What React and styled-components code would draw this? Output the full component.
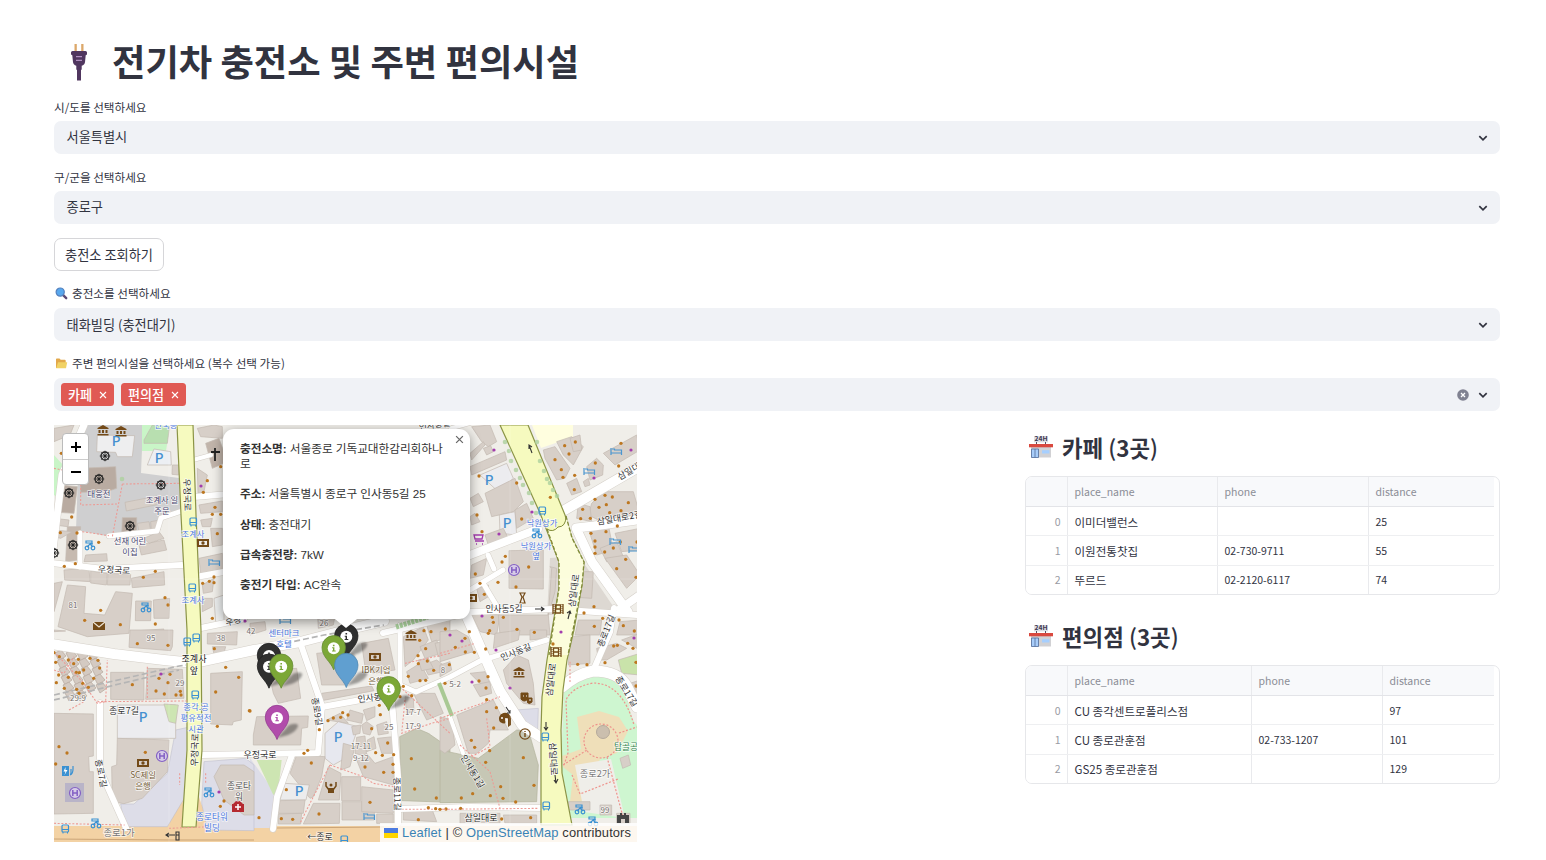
import React from "react";
import styled, { createGlobalStyle } from "styled-components";

const Global = createGlobalStyle`
  * { box-sizing: border-box; }
  body { margin: 0; background: #fff; overflow: hidden; }
`;
const Page = styled.main`
  width: 1546px; height: 860px; padding: 35px 46px 0 54px; overflow: hidden;
  font-family: "Noto Sans CJK KR", sans-serif; color: #31333f;
`;
const Title = styled.h1`
  display: flex; align-items: center; height: 50px; margin: 0 0 12.3px; gap: 11px; padding-left: 5px;
  font-size: 36.3px; line-height: 50px; font-weight: 700; white-space: nowrap;
  svg { margin-top: 2px; }
`;
const Label = styled.label`
  display: flex; align-items: center; gap: 4px; height: 20px; margin-bottom: 3.7px;
  font-size: 11.6px; line-height: 20px; white-space: nowrap;
`;
const Field = styled.section`
  display: flex; flex-direction: column; justify-content: space-between;
  height: ${p => p.$tall ? 57.9 : 57.2}px; margin-bottom: ${p => p.$gap ?? 12.8}px;
`;
const SelectBox = styled.div`
  display: flex; align-items: center; height: 33.5px; padding: 0 11px 0 ${p => p.$tags ? 7 : 12.5}px;
  border-radius: 7px; background: #f0f2f6; font-size: 13.2px; line-height: 20px; flex: none;
`;
const Fill = styled.div`flex: 1; display: flex; gap: 7px; padding-bottom: ${p => p.$lift ?? 0}px;`;
const Tag = styled.span`
  display: flex; align-items: center; justify-content: space-between; width: ${p => p.$w}px; height: 23px;
  padding: 0 7px; border-radius: 3.5px; background: #e05a54; color: #fff;
  font-size: 13.1px; font-weight: 500; line-height: 20px;
`;
const Tools = styled.div`display: flex; align-items: center; gap: 8px;`;
const Button = styled.button`
  width: 110px; height: 33px; margin: 13.7px 0 12.3px; padding: 0 0 1px; border: 1px solid #d6d6d9; border-radius: 7px;
  background: #fff; color: #31333f; font: 400 13.2px "Noto Sans CJK KR", sans-serif; display: block;
`;
const Columns = styled.div`display: grid; grid-template-columns: 958px 475px; column-gap: 13px; align-items: start;`;
const MapFrame = styled.div`
  position: relative; width: 583px; height: 417px; overflow: hidden; background: #f0eee9;
  font-family: "Liberation Sans", "Noto Sans CJK KR", sans-serif;
`;
const MapCanvas = styled.svg`
  display: block; width: 583px; height: 417px;
  text { font-family: "Noto Sans CJK KR", sans-serif; }
`;
const Zoom = styled.div`
  position: absolute; left: 8px; top: 8px; width: 27px; border: 1px solid #bbb; border-radius: 4px;
  background: #fff; overflow: hidden;
`;
const ZoomButton = styled.div`
  height: 25px; display: flex; align-items: center; justify-content: center; color: #000;
  & + & { border-top: 1px solid #ccc; }
`;
const Popup = styled.div`
  position: absolute; left: 169px; top: 4px; width: 247px; height: 190px; padding: 11.5px 20px 0 17px;
  border-radius: 11px; background: #fff; box-shadow: 0 3px 12px rgba(0,0,0,.4); color: #333;
  font-size: 11.7px; line-height: 15.17px; white-space: nowrap;
`;
const PopupTip = styled.span`
  position: absolute; left: 112px; bottom: -9px; border: solid transparent; border-width: 9px 11px 0;
  border-top-color: #fff;
`;
const Close = styled.span`position: absolute; right: 6px; top: 6px; line-height: 0;`;
const Line = styled.p`margin: 0 0 15.17px; letter-spacing: -.06px; b { font-weight: 700; }`;
const Credit = styled.div`
  position: absolute; right: 0; bottom: 0; width: 257px; height: 19px; display: flex; align-items: center; gap: 4px;
  padding: 0 4px; background: rgba(255,255,255,.82); font-size: 12.9px; letter-spacing: .12px; color: #333; white-space: nowrap;
  a { color: #3a83b5; }
`;
const Results = styled.aside`padding-top: 2px;`;
const Heading = styled.h2`
  display: flex; align-items: center; gap: 8px; height: 40px; margin: 0 0 9px; padding-left: 3px;
  font-size: 22.4px; line-height: 40px; font-weight: 700; white-space: nowrap;
  span { font-weight: 500; }
  svg { margin-top: 1px; }
`;
const Table = styled.div`
  height: 119px; margin-bottom: 21px; padding-right: 5px; border: 1px solid #e6e7ea; border-radius: 7px; overflow: hidden;
`;
const Row = styled.div`
  display: grid; grid-template-columns: 42px ${p => p.$cols}; height: ${p => p.$head ? 30 : 29.2}px;
  background: ${p => p.$head ? "#f8f9fb" : "#fff"}; color: ${p => p.$head ? "#8b8d96" : "#31333f"};
  border-bottom: 1px solid ${p => p.$head ? "#e3e4e8" : "#eeeff1"};
`;
const Cell = styled.div`
  display: flex; align-items: center; justify-content: ${p => p.$index ? "flex-end" : "flex-start"};
  padding: 1px 6.5px 0; border-right: ${p => p.$last ? 0 : 1}px solid #e9eaed;
  color: ${p => p.$index ? "#999ba3" : "inherit"}; font-size: ${p => p.$name ? 11.55 : 10.5}px; line-height: 20px; white-space: nowrap;
`;

const Chevron = () => <svg width="12" height="12" viewBox="0 0 12 12"><path d="M2.3 4.2 6 7.8l3.7-3.6" fill="none" stroke="#31333f" strokeWidth="1.7"/></svg>;
const Clear = () => <svg width="12" height="12" viewBox="0 0 12 12"><circle cx="6" cy="6" r="5.8" fill="#808291"/><path d="m4 4 4 4m0-4L4 8" stroke="#fff" strokeWidth="1.3"/></svg>;
const Cross = ({ c = "#fff", s = 8 }) => <svg width={s} height={s} viewBox="0 0 8 8"><path d="m1 1 6 6m0-6L1 7" stroke={c} strokeWidth="1.1"/></svg>;
const Plug = () => (
  <svg width="42" height="42" viewBox="0 0 42 42">
    <path d="M15.5 4h2.3v8h-2.3zm6.7 0h2.3v8h-2.3z" fill="#dca86a"/>
    <path d="M12 12.5q0-1.5 1.5-1.5h13q1.5 0 1.5 1.5v2l-1.3.7-.7 7q-.2 2-2 3l-1.3.6v4h-.7v10.7h-4v-10.7h-.7v-4l-1.3-.6q-1.7-1-2-3l-.7-7L12 14.5z" fill="#50365f"/>
    <path d="M17 16.7h6m-6 3.6h6" stroke="#c9a5d8" strokeWidth="1"/>
  </svg>
);
const Magnifier = () => <svg width="14" height="14" viewBox="0 0 14 14"><path d="m9.2 9.2 3 3" stroke="#5d4a75" strokeWidth="2.4" strokeLinecap="round"/><circle cx="6.2" cy="6.1" r="4.1" fill="#58a8ee" stroke="#5580bd" strokeWidth="1.2"/></svg>;
const Folder = () => <svg width="14" height="14" viewBox="0 0 14 14"><path d="M2 3.3q0-.8.8-.8h2.7l1.2 1.3h4q1 0 1 1V12H2z" fill="#e2a84a"/><path d="M4 6.3h9.2L12 12.3H2.2z" fill="#f1d264"/></svg>;
const Shop = () => (
  <svg width="26" height="24" viewBox="0 0 26 24">
    <path d="M6 0h14v6.5H6z" fill="#dedee3"/><path d="M8.5 6v3m9-3v3" stroke="#555060"/>
    <text x="6.6" y="5.3" fontSize="6" fontWeight="700" fill="#3c3550" textLength="13" lengthAdjust="spacingAndGlyphs">24H</text>
    <path d="M3 10h20v11.5H3z" fill="#d1d1d4"/><path d="M1 8h24v3.3H1z" fill="#d9493f"/>
    <path d="M3.5 13h7v8.5h-7zM7 13v8.5" fill="#a8cdfa" stroke="#536d9b" strokeWidth=".8"/><path d="M14 14.2h7.5v3.3H14z" fill="#a6cfff"/>
  </svg>
);

/* Road centre lines: [path, width] */
const roads = [
  ["M30 0 8 50-1 125", 7], ["M-2 138 50 144 128 140", 6], ["M26 142V108", 5], ["M55 111 103 106 107 93 128 86", 5],
  ["M-2 219 60 229 110 235 140 238 200 225 246 217 296 204 330 196", 10], ["M140 72 175 69M142 152 175 146M147 203 190 194", 6],
  ["M46 278V345L72 403", 6], ["M148 330 264 328 268 281 246 217", 6], ["M238 330 223 372 219 404", 6],
  ["M268 282 329 271 343 265", 6], ["M346 200V260L362 267 396 252 426 236 493 215", 5],
  ["M338 276 344 352V398", 6], ["M329 208 380 196 416 187 499 184 583 190", 6], ["M386 143 416 130 484 104", 8],
  ["M416 165 449 145M434 130 440 144M429 158 444 183", 5], ["M412 190 446 266 468 300 488 313", 10],
  ["M509 86 583 43", 10], ["M583 95 540 101 522 103 538 137 574 187", 9], ["M566 184 586 170", 8],
  ["M508 262 Q523 249 539 246 Q565 246 573 262L583 282", 11], ["M539 246 556 207 560 183", 6], ["M396 292 409 328", 4],
  ["M345 384 415 382 488 383", 6], ["M386 15 398 3 416-2M157 30 139 35", 4],
];
/* Map quadrants, each drawn in its own coordinates at three units per pixel */
const quads = [
  { at: [0, 0],
    b: ["130,30 242,32 235,95 190,95 185,82 128,80|#eeeeef", "77,130 185,125 188,190 158,200 80,202|#b9aba1", "20,180 70,185 60,265 12,262|#b9aba1", "205,278 248,278 248,330 203,330|#b9aba1", "40,305 80,305 72,405 35,410|#c6bab0", "213,232 310,213 314,238 217,258", "290,95 300,72 350,80 352,120 280,120|#eceff3", "270,45 295,0 347,0 340,55 270,55|#b8dfb0", "255,360 330,345 338,375 262,390", "270,340 315,320 330,340 285,355", "250,295 285,290 290,315 255,320", "290,290 318,285 318,315 292,317", "355,120 375,120 374,150 354,148", "95,390 158,386 160,408 90,410", "30,435 105,430 108,470 32,465", "110,438 160,445 157,480 110,474", "162,445 230,448 228,480 160,480", "232,460 330,440 332,480 235,488", "40,480 95,485 90,565 152,570 185,500 235,505 225,625 100,635 12,605", "0,475 25,470 0,560", "245,528 292,528 290,587 244,587", "298,525 347,520 345,580 300,580", "253,617 330,612 320,630 250,630", "0,280 45,285 42,305 0,300", "0,315 55,320 20,340 0,335", "430,10 480,0 505,5 505,40 440,35", "455,55 495,40 520,110 475,130|#c1b4aa", "430,130 460,150 450,200 432,205", "435,240 505,228 505,260 440,265", "440,285 475,280 470,305 445,305", "470,310 505,310 505,360 475,365", "435,400 505,385 505,432 440,445", "445,480 480,460 475,500 448,505", "445,520 475,520 475,545 445,560", "480,520 510,510 510,600 485,590|#eceeee", "0,10 60,0 48,30 0,50"],
    r: ["M80 145 80 240 190 237M205 177 375 175M205 177 175 335M85 320 165 332M0 130 25 135"],
    d: "22,85 53,276 19,323 69,324 134,352 64,416 31,424 268,457 304,439 140,556 92,586 199,599 333,518 342,540 304,597 460,167 448,202 500,125 483,247 475,268 500,268 490,326 446,475 466,469 480,456 480,473 475,580" },
  { at: [0, 205],
    b: ["228,0 357,0 355,50 350,62 225,52", "0,0 35,3 0,5", "170,127 270,127 270,210 170,208", "280,115 385,118 390,205 275,208", "0,250 118,252 118,378 104,380 106,425 118,425 118,550 0,552", "190,225 365,225 365,325 190,325|#ececef", "190,325 345,330 340,425 265,505 210,521 175,515 173,410 188,405", "330,222 373,225 365,280 345,275|#cde5b2", "460,10 550,5 548,45 460,42", "475,50 515,50 510,68 480,72", "470,130 565,125 562,270 538,275 535,285 470,282", "500,405 570,405 600,425 600,555 570,555 510,510 480,440"],
    l: ["365,300 402,292 400,490 340,590 212,590 200,522 240,522 340,430", "450,395 575,385 600,405 600,602 460,600 443,520"],
    r: ["M0 65 85 155 130 220 155 215 160 90M0 120 30 130 60 80M45 240 90 215M130 215 400 213M280 110V210M0 580 212 585M345 595 470 590M377 430V465M455 430V460"],
    d: "250,41 342,46 481,56 515,112 554,142 485,186 586,242 490,289 5,97 14,135 7,158 0,68 16,80 43,90 59,101 73,88 108,85 132,91 137,114 89,120 76,128 43,142 67,127 119,145 235,164 31,175 68,178 86,160 103,172 75,190 315,145 348,133 342,158 306,183 331,192 366,195 379,184 381,195 15,350 39,369 5,402 274,367 510,513 499,529" },
  { at: [196, 185],
    b: ["0,40 45,35 48,60 0,75|#d9d0c9", "202,0 258,0 250,45 205,55", "200,130 250,125 285,225 215,225", "335,100 415,85 435,180 370,190 345,170", "55,180 140,175 152,265 85,280 70,250", "10,375 20,320 175,318 173,352 155,355 152,405 10,405", "215,250 365,228 372,242 215,272", "270,310 295,340 230,330", "265,335 325,350 295,440 250,465 225,445 225,370|#e7e8ef", "300,300 340,312 335,340 290,330", "340,300 375,290 375,320 350,332", "335,345 350,335 370,350 360,375 340,370", "305,350 332,345 330,370 310,375", "320,382 345,378 350,440 315,430", "352,390 372,380 378,415 350,425", "280,400 315,410 300,470 272,480", "380,345 410,335 415,370 385,375", "382,385 430,380 430,430 395,430", "320,450 350,430 375,460 430,440 430,525 340,500", "140,435 225,440 215,500 190,560 180,565 120,490", "105,520 178,525 168,570 90,570|#ececed", "90,572 165,570 160,610 85,610", "85,612 155,610 152,642 85,642", "235,470 273,490 268,570 205,570", "190,580 270,580 268,640 160,642", "275,500 332,500 332,572 275,572", "276,575 375,575 372,630 276,630", "335,530 430,540 430,610 335,605", "380,612 430,612 430,640 380,640", "460,80 520,50 535,90 490,150 465,170", "530,45 600,30 600,85 545,95", "510,110 560,90 575,130 525,145", "470,185 510,160 535,205 480,220", "520,165 560,150 600,180 535,195", "490,250 555,250 580,310 530,330", "465,260 490,265 492,305 470,310", "460,600 545,595 560,635 460,630", "505,150 535,145 550,175 515,182", "555,100 600,90 600,135 565,140"],
    v: ["20,450 95,450 85,540 70,555"],
    r: ["M240 465 185 570 150 640M240 465 340 500 370 520 430 530M455 598 600 598M465 160 600 130M450 230 600 370M400 0 410 25M465 270 455 370 545 340 600 325"],
    k: ["449,380 500,355 535,370 600,415 600,577 455,572"],
    d: "184,459 109,539 94,626 128,628 207,612 27,623 162,430 173,421 208,359 234,332 250,324 272,322 294,315 278,308 388,286 391,314 365,356 413,399 377,428 397,436 431,434 345,471 429,463 401,487 429,487 360,577 505,629 484,446 494,537 559,564 535,593 557,596 588,597 509,91 522,62 543,65 586,57 527,116 504,137 532,153 551,181 505,161 475,199 510,212 527,211 460,229 450,260 485,257 0,303" },
  { at: [386, 0],
    b: ["95,5 150,0 170,50 145,65 125,50", "130,70 152,62 160,80 140,90", "185,0 235,0 210,10", "90,125 195,80 200,105 95,150", "120,150 200,115 220,160 175,200|#ececef", "135,205 225,160 250,230 220,260 155,275", "178,270 225,260 230,330 180,325|#ececef", "225,255 260,235 280,280 230,310", "90,220 115,205 130,230 100,245", "90,275 105,265 120,290 95,300", "135,330 190,310 205,340 145,360", "207,377 310,375 310,492 207,490", "310,75 345,65 390,130 375,160 350,165 315,100", "350,50 395,35 430,65 400,120 370,90", "390,40 420,30 425,75 400,80", "490,85 590,30 600,75 525,120", "440,125 470,100 490,120 488,150 450,165", "380,175 410,160 425,200 395,210", "430,170 445,160 450,180 435,185", "455,235 490,200 580,200 600,270 485,290 445,270", "415,235 450,245 455,290 410,280", "445,310 505,300 520,375 470,390", "480,370 530,350 550,395 500,410", "495,400 560,390 600,450 560,490", "525,325 600,310 600,375 545,380", "330,425 350,430 345,500 325,570 335,430", "380,440 460,440 455,520 380,515", "95,420 140,400 130,450 90,460", "110,490 145,480 145,515 120,530", "90,560 130,565 180,570 170,630 120,620", "175,570 325,570 330,630 180,630", "415,585 485,585 480,630 405,630", "540,590 600,585 600,630 530,630", "90,85 130,50 135,60 95,105"],
    d: "406,51 374,62 387,87 345,104 364,134 369,157 404,151 403,194 466,114 536,123 543,55 117,153 230,174 331,217 111,270 126,320 245,282 495,211 517,216 465,223 428,253 499,239 477,247 509,263 543,257 565,233 422,281 451,280 532,303 498,320 453,325 465,348 541,351 591,351 465,366 520,369 465,385 494,381 557,403 530,431 588,457 196,394 186,411 106,447 120,475 174,472 228,486 266,426 133,508 432,564 488,580 157,577 160,592 190,577 149,617 231,613 283,622 463,604 537,585 550,602 583,618 462,545" },
  { at: [386, 205],
    b: ["0,5 50,0 85,20 100,65 0,95", "0,105 30,95 35,120 0,140", "85,0 100,0 120,10 110,25", "165,10 240,0 235,30 160,55", "270,0 320,0 320,25 270,30", "190,120 230,75 265,90 280,160 285,225 250,220 200,160", "50,255 160,210 205,300 150,300 145,340 110,370 85,370", "90,130 135,125 150,160 125,165", "100,165 150,155 155,190 120,200", "0,260 35,270 45,345 15,370 0,360", "390,20 450,15 450,100 385,105", "470,55 530,40 560,55 500,90 475,90", "535,90 600,70 600,135 545,130|#c9e3aa", "545,30 600,10 600,60", "570,160 600,150 600,210 585,200", "385,515 450,515 450,540 385,540", "480,525 515,525 515,555 480,555", "540,385 565,375 572,405 548,415", "60,550 180,550 180,580 60,580", "190,555 290,555 290,580 195,580", "530,550 570,550 570,580 530,580"],
    l: ["228,240 295,235 293,300 275,297 245,280"],
    k: ["0,360 80,377 115,385 230,300 265,300 295,405 290,515 0,518"],
    r: ["M0 70 105 40M0 265 180 200M140 265 150 350 95 380M60 345 150 425 180 535M0 538 295 535M390 95V160"],
    d: "75,25 88,5 145,10 46,52 76,66 103,67 28,104 15,160 117,153 138,174 144,140 137,57 140,209 169,233 140,245 161,294 94,331 104,352 149,362 137,397 250,383 98,491 64,504 151,497 182,470 189,505 227,516 282,466 0,538 62,535 272,563 339,42 413,103 441,104 521,48 532,46 563,40 495,98 579,55 588,97 588,168 185,567" },
];
const purpleDots = [[147,61],[191,196],[440,25],[577,25],[540,53],[478,87],[445,109],[428,191],[396,210],[507,207],[456,263],[107,249],[408,216],[442,225],[580,213],[418,257],[165,367]];
/* Place names: x, y (baseline), label, size, colour, rotation */
const labels = [
  [45,72,"대웅전",8.3,"#47446e"],[108,78,"조계사 일",8.3,"#47446e"],[108,89,"주문",8.3,"#47446e"],[76,119,"선재 어린",8.3,"#47446e"],[76,130,"이집",8.3,"#47446e"],
  [60,148,"우정국로",8.8,"#333",3],[130,70,"우정국로",8.8,"#333",88],[139,112,"조계사",8.3,"#4c78df"],[139,178,"조계사",8.3,"#4c78df"],[112,3,"안국동",8.3,"#4c78df"],
  [19,183,"81",8,"#77716d"],[97,216,"95",8,"#77716d"],[167,216,"38",8,"#77716d"],[197,209,"42",8,"#77716d"],[270,201,"26",8,"#77716d"],[24,276,"29-9",8,"#77716d"],[126,261,"29",8,"#77716d"],
  [140,237,"조계사",9,"#222"],[140,249,"앞",9,"#222"],[70,289,"종로7길",9,"#333"],[142,285,"종각.공",8.4,"#4c78df"],[142,296,"평유적전",8.4,"#4c78df"],[142,307,"시관",8.4,"#4c78df"],
  [144,325,"우정국로",9,"#333",-88],[44,349,"종로7길",8.6,"#333",78],[89,353,"SC제일",8.4,"#76613a"],[89,364,"은행",8.4,"#76613a"],[185,364,"종로타",8.7,"#555"],[185,375,"워",8.7,"#555"],[158,395,"종로타워",8.6,"#4c78df"],[158,406,"빌딩",8.6,"#4c78df"],
  [65,411,"종로1가",9.4,"#777"],[266,415,"←종로",9,"#333"],[206,333,"우정국로",9,"#333"],[180,199,"우정",8.5,"#333",-15],[230,211,"센터마크",8.4,"#4c78df"],[230,222,"호텔",8.4,"#4c78df"],
  [260,287,"종로9길",8.6,"#333",80],[322,248,"IBK기업",8.4,"#76613a"],[322,259,"은행",8.4,"#76613a"],[316,276,"인사동",8.8,"#333",-7],[340,369,"종로11길",8.7,"#333",88],
  [359,290,"17-7",8,"#77716d"],[335,305,"25",8,"#77716d"],[359,304,"17-9",8,"#77716d"],[307,324,"17-11",8,"#77716d"],[307,336,"9-12",8,"#77716d"],[401,262,"5-2",8,"#77716d"],[389,248,"8",8,"#77716d"],
  [488,101,"낙원상가",8.3,"#4c78df"],[482,124,"낙원상가",8.3,"#4c78df"],[482,134,"옆",8.3,"#4c78df"],[450,187,"인사동5길",8.7,"#333"],[523,166,"삼일대로",9,"#333",-82],[580,47,"삼일대로",9,"#333",-30],[566,96,"삼일대로2길",8.9,"#333",-10],[555,207,"종로17길",8.8,"#333",-68],
  [463,230,"인사동길",8.8,"#333",-22],[500,255,"삼일대로",9,"#333",-83],[496,334,"삼일대로",9,"#333",87],[570,268,"종로17길",8.8,"#333",58],[416,348,"인사동1길",8.8,"#333",58],[427,396,"삼일대로",9,"#333"],[541,352,"종로2가",9.2,"#777"],[576,325,"탑골공원",8.7,"#36844e"],[551,388,"99",8,"#77716d"],[381,3,"인사동길",8.5,"#333",-8],
];
const Wheel = ({ x, y }) => <g transform={`translate(${x} ${y})`} stroke="#222" fill="none"><circle r="4" strokeWidth="1.3"/><path d="M-5.3 0h10.6M0-5.3v10.6M-3.8-3.8 3.8 3.8M3.8-3.8-3.8 3.8" strokeWidth=".7"/><circle r="1" fill="#222"/></g>;
const Bus = ({ x, y }) => <g transform={`translate(${x} ${y})`}><rect x="-3" y="-4" width="6.5" height="7" rx="1" fill="none" stroke="#3a91d2" strokeWidth="1.2"/><path d="M-3 .5h6M-2 3v1.5M2.5 3v1.5" stroke="#3a91d2"/></g>;
const Bed = ({ x, y }) => <path transform={`translate(${x} ${y})`} d="M-5-3V4M-5 2H5.5V-1H-1.5V-2H-4M5.5 1v3" fill="none" stroke="#4b96d0" strokeWidth="1.2"/>;
const Bike = ({ x, y }) => <g transform={`translate(${x} ${y})`} fill="none" stroke="#3a91d2" strokeWidth="1.2"><path d="M-4-4h6v2h-6zM-3 2 0-1 3 2M0-1h3"/><circle cx="-3" cy="3" r="1.8"/><circle cx="3" cy="3" r="1.8"/></g>;
const Museum = ({ x, y }) => <path transform={`translate(${x} ${y})`} d="M-5.5-2 0-5l5.5 3v1h-11zm1 2h2v3h-2zm3.5 0h2v3h-2zm3.5 0h2v3h-2zm-8 4h11v1.5h-11z" fill="#734a18"/>;
const Bank = ({ x, y }) => <g transform={`translate(${x} ${y})`}><path d="M-6-4H6v8H-6zM-4-2v4h8v-4z" fill="#734a18" fillRule="evenodd"/><circle r="1.7" fill="#734a18"/></g>;
const Hotel = ({ x, y }) => <g transform={`translate(${x} ${y})`} fill="#d6cbe7" stroke="#8461c4"><circle r="5.5" strokeWidth="1.2"/><path d="M-2.2-3v6M2.2-3v6M-2.2 0h4.4" strokeWidth="1.5"/></g>;
const Film = ({ x, y }) => <g transform={`translate(${x} ${y})`} fill="none" stroke="#734a18"><path d="M-5-5v10M5-5v10M-2.5-4h5v8h-5zM-2.5 0h5" strokeWidth="1.3"/><path d="M-4-5v10M4-5v10" strokeDasharray="1 1"/></g>;
const Pin = ({ x, y, color, dark, plain }) => (
  <g transform={`translate(${x} ${y})`}>
    <path d="M0 20 12 7q9-3 9 1-1 5-10 9z" fill="#000" opacity=".35" filter="url(#soft)"/>
    <path d="M0 21.5C-3 13-11.7 9-11.7-1a11.7 11.7 0 0 1 23.4 0C11.7 9 3 13 0 21.5Z" fill={color} stroke={dark} strokeWidth=".8"/>
    {!plain && <><circle r="6" fill="#fff"/><path d="M-1.6-1H.7v3.3H2v1H-1.7v-1h1V0h-.9zM-.8-3.6H.8v1.5H-.8z" fill={color}/></>}
  </g>
);
const MapDrawing = () => (
  <MapCanvas viewBox="0 0 583 417">
    <defs><filter id="soft"><feGaussianBlur stdDeviation="1"/></filter></defs>
    <rect width="583" height="417" fill="#f0eee9"/>
    <path d="M27 0H89L87 48 125 53 127 88 108 92 100 106 58 112 22 105 24 50Z" fill="#cfcfd0"/>
    <path d="M0 30 9 40 5 73 0 70ZM88 0H116L112 26 88 26Z" fill="#c9f5c7"/>
    <path d="M0 401H583V417H0ZM98 402Q121 393 130 369H144Q150 391 163 402Z" fill="#f3d2a4"/>
    <path d="M478 0H519V12L487 23Z" fill="#fffedf"/><path d="M496 133 525 131 565 190H493Z" fill="#ddd8d2"/>
    <path d="M196 333 224 372 220 403H196Z" fill="#dddde8"/>
    <path d="M510 267Q525 251 539 250 570 250 574 275 577 295 583 300V393H517L507 342Z" fill="#cef6d0"/>
    <path d="M523 292 545 286 565 292 574 306 563 328 546 334 533 367 535 376 516 377 519 350 509 342 508 331 527 324Z" fill="#efdfb9"/>
    <path d="M521 340 557 334 571 393 530 387Z" fill="#efeee9"/>
    {quads.map((q, i) => (
      <g key={i} transform={`translate(${q.at[0]} ${q.at[1]}) scale(.33333)`}>
        {q.l?.map(p => <polygon key={p} points={p} fill="#dddde8" stroke="#b9b9c8" strokeWidth="1.5"/>)}
        {q.v?.map(p => <polygon key={p} points={p} fill="#cde5b2"/>)}
        {q.k?.map(p => <polygon key={p} points={p} fill="#c6c7b5" stroke="#b2b29c" strokeWidth="2"/>)}
        {q.b.map(s => { const [p, c] = s.split("|"); return <polygon key={s} points={p} fill={c || "#d7cfc8"} stroke="#c4bab2" strokeWidth="2.2"/>; })}
      </g>
    ))}
    <g fill="#d4cac2" stroke="#b4a69c" strokeWidth=".7">
      {[...Array(22)].map((_, i) => { const x = 1 + (i * 11) % 42, y = 228 + Math.floor(i / 4) * 8; return <path key={i} d={`M${x} ${y}l6-3 5 6-7 5z`}/>; })}
    </g>
    <g fill="none" strokeLinejoin="round" strokeLinecap="round">
      {roads.map(([d, w]) => <path key={d} d={d} stroke="#d5d0c9" strokeWidth={w + 1}/>)}
      {roads.map(([d, w]) => <path key={d} d={d} stroke="#fff" strokeWidth={w}/>)}
    </g>
    <path d="M123 0H139L142 90 147 205 148 325 142 402H128L133 325 133 205 127 90Z" fill="#f6fabf" stroke="#8b9446" strokeWidth="1.2"/>
    <path d="M446 0 486 88 505 137V163L498 205 493 235 488 272 487 305V400H518L508 348 507 305 509 265 513 235 520 205 528 160 530 137 518 113 511 90 474 0Z" fill="#f6fabf" stroke="#8b9446" strokeWidth="1.2"/>
    <path d="M493 104Q499 108 504 102 512 102 512 91L518 113 530 137 528 160 519 205 514 230H495L505 163V137Z" fill="#fcfddc"/>
    <path d="M512 91 518 113 530 137 528 160 519 205 514 230M493 104 505 137V163L495 230" fill="none" stroke="#818b39" strokeWidth="1.3" strokeDasharray="4 2"/>
    <path d="M493 104Q499 108 504 102 512 102 512 91" fill="none" stroke="#818b39" strokeWidth="1"/>
    <path d="M0 414 118 415 200 415M223 403 330 402" fill="none" stroke="#caa477" strokeWidth="1"/>
    <path d="M0 270 55 257 125 241 132 240M0 275 65 259 125 245M205 224 270 210 330 200" fill="none" stroke="#b5b5b5" strokeWidth="1.7" strokeDasharray="6 3"/>
    <path d="M342 202 383 189" stroke="#abd39d" strokeWidth="5" strokeDasharray="3 1"/><path d="M385 258 398 291" stroke="#a9c994" strokeWidth="4"/>
    <g fill="#add19e" opacity=".8">{[[451,17],[455,26],[457,36],[462,45],[466,53],[469,60],[475,68],[478,78],[482,88],[483,17],[486,36],[490,46],[493,54],[496,58],[499,65],[503,71],[68,54]].map(([x,y]) => <circle key={`${x}-${y}`} cx={x} cy={y} r="2.3"/>)}</g>
    {quads.map((q, i) => (
      <g key={i} transform={`translate(${q.at[0]} ${q.at[1]}) scale(.33333)`}>
        {q.r?.map(d => <path key={d} d={d} fill="none" stroke="#ed9a94" strokeWidth="3.2" strokeDasharray="6 5"/>)}
        {q.d.split(" ").map((p, n) => <circle key={n} cx={p.split(",")[0]} cy={p.split(",")[1]} r="4.9" fill="#bd7720"/>)}
      </g>
    ))}
    <g fill="none" stroke="#ee938c" strokeWidth="1.2" strokeDasharray="2 1.7"><path d="M510 340 514 328 512 275Q518 262 539 258 568 258 580 300M565 308 583 302M509 340 533 325M518 350 526 369 564 354M553 332 569 392"/><circle cx="547" cy="316" r="17"/></g>
    <circle cx="549" cy="307" r="6.5" fill="#cbbfae" stroke="#b5aa9c"/>
    {purpleDots.map(([x, y]) => <circle key={`${x}-${y}`} cx={x} cy={y} r="1.6" fill="#a33cae"/>)}
    {[[51,31],[45,54],[107,60],[15,68],[76,101],[19,120],[0,128]].map(([x,y]) => <Wheel key={x} x={x} y={y}/>)}
    {[[139,97],[138,163],[142,213],[133,217],[141,270],[11,404],[488,86],[491,312],[492,381],[290,415]].map(([x,y]) => <Bus key={`${x}-${y}`} x={x} y={y}/>)}
    {[[562,26],[535,46],[561,116],[580,124],[160,137],[231,195],[315,391]].map(([x,y]) => <Bed key={x} x={x} y={y}/>)}
    {[[92,182],[36,120],[42,398],[155,367],[483,108],[526,384],[539,396]].map(([x,y]) => <Bike key={x} x={x} y={y}/>)}
    {[[49,5],[67,6],[357,210],[465,247]].map(([x,y]) => <Museum key={x} x={x} y={y}/>)}
    {[[149,118],[89,338],[321,232],[417,173]].map(([x,y]) => <Bank key={x} x={x} y={y}/>)}
    <rect x="11" y="358" width="19" height="19" fill="#b9b4c8"/>
    {[[108,331],[21,368],[460,145]].map(([x,y]) => <Hotel key={x} x={x} y={y}/>)}
    <Film x={504} y={184}/><Film x={502} y={227}/>
    <path d="M161 23v13M157 27h9" stroke="#222" strokeWidth="1.8"/>
    <g><path d="M39 197h12v8H39z" fill="#734a18"/><path d="m39 197 6 5 6-5" fill="none" stroke="#eee5d6" strokeWidth="1.2"/></g>
    <path d="M8 341h7v10H8z" fill="#3a91d2"/><path d="M16 349h1v-5M19 341v3q0 5-3 6" fill="none" stroke="#3a91d2" strokeWidth="1.2"/><path d="m11.5 342-2 4.5h2l-1 3.5 3-5h-2z" fill="#fff"/>
    <path d="M178 379h12v8h-12zm1 0 3-3h4l3 3" fill="#b52a30"/><path d="M184 379v6M181 382h6" stroke="#fff" strokeWidth="1.5"/>
    <path d="M420 110h9l-1 4h-7zm1 6h9M422 119h1m5 0h1" fill="none" stroke="#a33cae" strokeWidth="1.3"/>
    <path d="M446 297a6 6 0 1 1 11-3v6l-3 2v-9l-3 2q2 6-5 2z" fill="#734a18"/><circle cx="448" cy="293" r="1" fill="#fff"/><circle cx="452" cy="294" r="1" fill="#fff"/>
    <path d="M467 268h7v6q-4 4-7 0zM473 273h5v4q-3 3-5 0" fill="#734a18" stroke="#734a18" strokeWidth="1"/><path d="M469 271h1m2 0h1M475 275h2" stroke="#eee"/>
    <circle cx="471" cy="309" r="5.2" fill="none" stroke="#734a18" strokeWidth="1.2"/><path d="M471 308v4m0-6v1" stroke="#734a18" strokeWidth="1.4"/>
    <path d="M466 168h5l-2 4 2 6h-5l2-6z" fill="none" stroke="#734a18" strokeWidth="1.2"/>
    <path d="M272 357v4l3 4v2h4v-2l3-4v-4" fill="none" stroke="#734a18" strokeWidth="1.5"/><circle cx="277" cy="360" r="1.5" fill="#734a18"/><path d="M274 363h6v5h-6z" fill="#734a18"/>
    <path d="M563 398v-8h3v-2h2v2h2v-2h2v2h3v8h-4v-4h-4v4z" fill="#444"/>
    <path d="M481 184h9m-3-2 3 2-3 2M478 28l-3-8m0 4v-4l3 2M514 194l2-8m-3 2 3-2 1 3M492 297v8m-2-3 2 3 2-3M501 350l1 8m-2-3 2 3 2-4M452 282l4 6m-3 0h3v-3M121 410h-9m3-2-3 2 3 2M122 407h3v3h-3zm0 3h3v5h-3z" fill="none" stroke="#333" strokeWidth="1.1"/>
    {[[62,21],[105,38],[435,60],[453,103],[284,317],[245,371],[89,297]].map(([x,y]) => <text key={x} x={x} y={y} fill="#4590d0" fontSize="13.5" fontWeight="500" textAnchor="middle">P</text>)}
    {labels.map(([x, y, text, size, color, rot], i) => <text key={i} transform={`translate(${x} ${y}) rotate(${rot || 0})`} fontSize={size} fill={color} textAnchor="middle" fontWeight="400" stroke="#fff" strokeWidth="1.5" strokeOpacity=".75" paintOrder="stroke">{text}</text>)}
    <path d="M115 0V417M0 154H583M456 0V417" stroke="#fff" opacity=".18" strokeWidth=".8"/>
    <Pin x={215} y={231} color="#303030" dark="#202020"/><Pin x={292.3} y={211.7} color="#303030" dark="#202020"/>
    <Pin x={279.7} y={223.3} color="#7ca737" dark="#658b32"/><Pin x={292.3} y={241} color="#609fd0" dark="#5189b4" plain/>
    <Pin x={215} y={241.7} color="#303030" dark="#202020"/><Pin x={227.2} y={241.7} color="#7ca737" dark="#658b32"/>
    <Pin x={334.7} y={264.2} color="#7ca737" dark="#658b32"/><Pin x={223} y={293} color="#b14cab" dark="#933c90"/>
  </MapCanvas>
);
const info = [["충전소명", <>서울종로 기독교대한감리회하나<br/>로</>], ["주소", "서울특별시 종로구 인사동5길 25"], ["상태", "충전대기"], ["급속충전량", "7kW"], ["충전기 타입", "AC완속"]];
const Select = ({ label, icon, value }) => <Field $tall={!!icon} $gap={icon ? 12.1 : 12.8}><Label>{icon}{label}</Label><SelectBox><Fill $lift={icon ? 0 : 2}>{value}</Fill><Chevron/></SelectBox></Field>;
const Places = ({ name, rows, cols }) => (
  <>
    <Heading><Shop/><div>{name} <span>(</span>3곳<span>)</span></div></Heading>
    <Table>
      <Row $head $cols={cols}><Cell $index/>{["place_name", "phone", "distance"].map((h, i) => <Cell key={h} $last={i === 2}>{h}</Cell>)}</Row>
      {rows.map((r, i) => <Row key={i} $cols={cols}><Cell $index>{i}</Cell>{r.map((v, j) => <Cell key={j} $name={j === 0} $last={j === 2}>{v}</Cell>)}</Row>)}
    </Table>
  </>
);

export default function App() {
  return (
    <Page>
      <Global/>
      <Title><Plug/><span>전기차 충전소 및 주변 편의시설</span></Title>
      <Select label="시/도를 선택하세요" value="서울특별시"/>
      <Select label="구/군을 선택하세요" value="종로구"/>
      <Button>충전소 조회하기</Button>
      <Select icon={<Magnifier/>} label="충전소를 선택하세요" value="태화빌딩 (충전대기)"/>
      <Field $tall $gap={13.9}>
        <Label><Folder/>주변 편의시설을 선택하세요 (복수 선택 가능)</Label>
        <SelectBox $tags><Fill><Tag $w={53}>카페<Cross/></Tag><Tag $w={65}>편의점<Cross/></Tag></Fill><Tools><Clear/><Chevron/></Tools></SelectBox>
      </Field>
      <Columns>
        <MapFrame>
          <MapDrawing/>
          <Zoom>
            <ZoomButton><svg width="12" height="12"><path d="M1 6h10M6 1v10" stroke="#000" strokeWidth="2"/></svg></ZoomButton>
            <ZoomButton><svg width="12" height="12"><path d="M1 6h10" stroke="#000" strokeWidth="2"/></svg></ZoomButton>
          </Zoom>
          <Popup>
            {info.map(([k, v]) => <Line key={k}><b>{k}:</b> {v}</Line>)}
            <Close><Cross c="#666" s={9}/></Close><PopupTip/>
          </Popup>
          <Credit><svg width="14" height="10"><path d="M0 0h14v5H0z" fill="#4c7be1"/><path d="M0 5h14v5H0z" fill="#ffd500"/></svg><a>Leaflet</a><span>| © <a>OpenStreetMap</a> contributors</span></Credit>
        </MapFrame>
        <Results>
          <Places name="카페" cols="150px 151px 1fr" rows={[["이미더밸런스", "", "25"], ["이원전통찻집", "02-730-9711", "55"], ["뚜르드", "02-2120-6117", "74"]]}/>
          <Places name="편의점" cols="184px 131px 1fr" rows={[["CU 종각센트로폴리스점", "", "97"], ["CU 종로관훈점", "02-733-1207", "101"], ["GS25 종로관훈점", "", "129"]]}/>
        </Results>
      </Columns>
    </Page>
  );
}
